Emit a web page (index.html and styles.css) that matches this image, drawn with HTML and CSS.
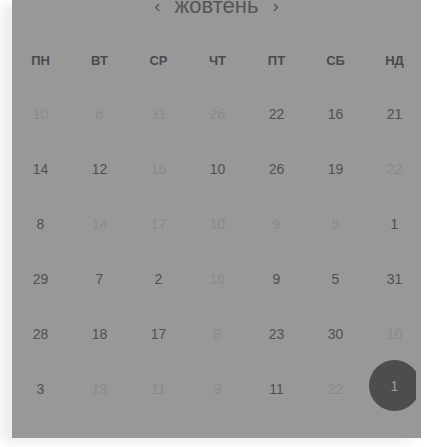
FILE: index.html
```html
<!DOCTYPE html>
<html lang="uk">
<head>
  <meta charset="UTF-8">
  <meta name="viewport" content="width=device-width, initial-scale=1.0">
  <title>Календар</title>
  <link rel="stylesheet" href="styles.css">
</head>
<body>
  <div class="page">
    <div class="panel">
      <div class="title">
        <span class="nav">&#8249;</span>
        <span class="month">жовтень</span>
        <span class="nav">&#8250;</span>
      </div>
      <div class="grid">
        <div class="wd">пн</div><div class="wd">вт</div><div class="wd">ср</div><div class="wd">чт</div><div class="wd">пт</div><div class="wd">сб</div><div class="wd">нд</div>

        <div class="day dim">10</div><div class="day dim">6</div><div class="day dim">31</div><div class="day dim">26</div><div class="day">22</div><div class="day">16</div><div class="day">21</div>
        <div class="day">14</div><div class="day">12</div><div class="day dim">16</div><div class="day">10</div><div class="day">26</div><div class="day">19</div><div class="day dim">22</div>
        <div class="day">8</div><div class="day dim">14</div><div class="day dim">17</div><div class="day dim">10</div><div class="day dim">9</div><div class="day dim">5</div><div class="day">1</div>
        <div class="day">29</div><div class="day">7</div><div class="day">2</div><div class="day dim">16</div><div class="day">9</div><div class="day">5</div><div class="day">31</div>
        <div class="day">28</div><div class="day">18</div><div class="day">17</div><div class="day dim">8</div><div class="day">23</div><div class="day">30</div><div class="day dim">10</div>
        <div class="day">3</div><div class="day dim">19</div><div class="day dim">11</div><div class="day dim">9</div><div class="day">11</div><div class="day dim">22</div><div class="day"><span class="today">1</span></div>
      </div>
    </div>
  </div>
</body>
</html>
```
FILE: styles.css
```css
body {
  margin: 0;
  background: #fff;
  font-family: "Liberation Sans", Arial, sans-serif;
}

.page {
  height: 447px;
  overflow: hidden;
  padding-left: 12px;
}

.panel {
  width: 409px;
  height: 438px;
  background: #989898;
  box-shadow: -10px 4px 12px rgba(0, 0, 0, 0.08);
  overflow: hidden;
}

.title {
  display: flex;
  justify-content: center;
  align-items: center;
  gap: 14px;
  height: 26px;
  margin-top: -7px;
  color: #555;
}

.month {
  font-size: 22px;
  line-height: 26px;
}

.nav {
  font-size: 19px;
  line-height: 26px;
}

.grid {
  display: grid;
  grid-template-columns: repeat(7, 59px);
  grid-template-rows: 51px;
  grid-auto-rows: 55px;
  margin-top: 16px;
  margin-left: -1px;
}

.wd {
  display: flex;
  align-items: center;
  justify-content: center;
  font-size: 13px;
  font-weight: bold;
  text-transform: uppercase;
  color: #4a4a4a;
}

.day {
  display: flex;
  align-items: center;
  justify-content: center;
  font-size: 14px;
  color: #505050;
}

.dim {
  color: #8a8a8a;
}

.today {
  display: flex;
  align-items: center;
  justify-content: center;
  width: 51px;
  height: 51px;
  margin-top: -6px;
  border-radius: 50%;
  background: #4d4d4d;
  color: #9a9a9a;
  clip-path: inset(0 4px 0 0);
}
```
